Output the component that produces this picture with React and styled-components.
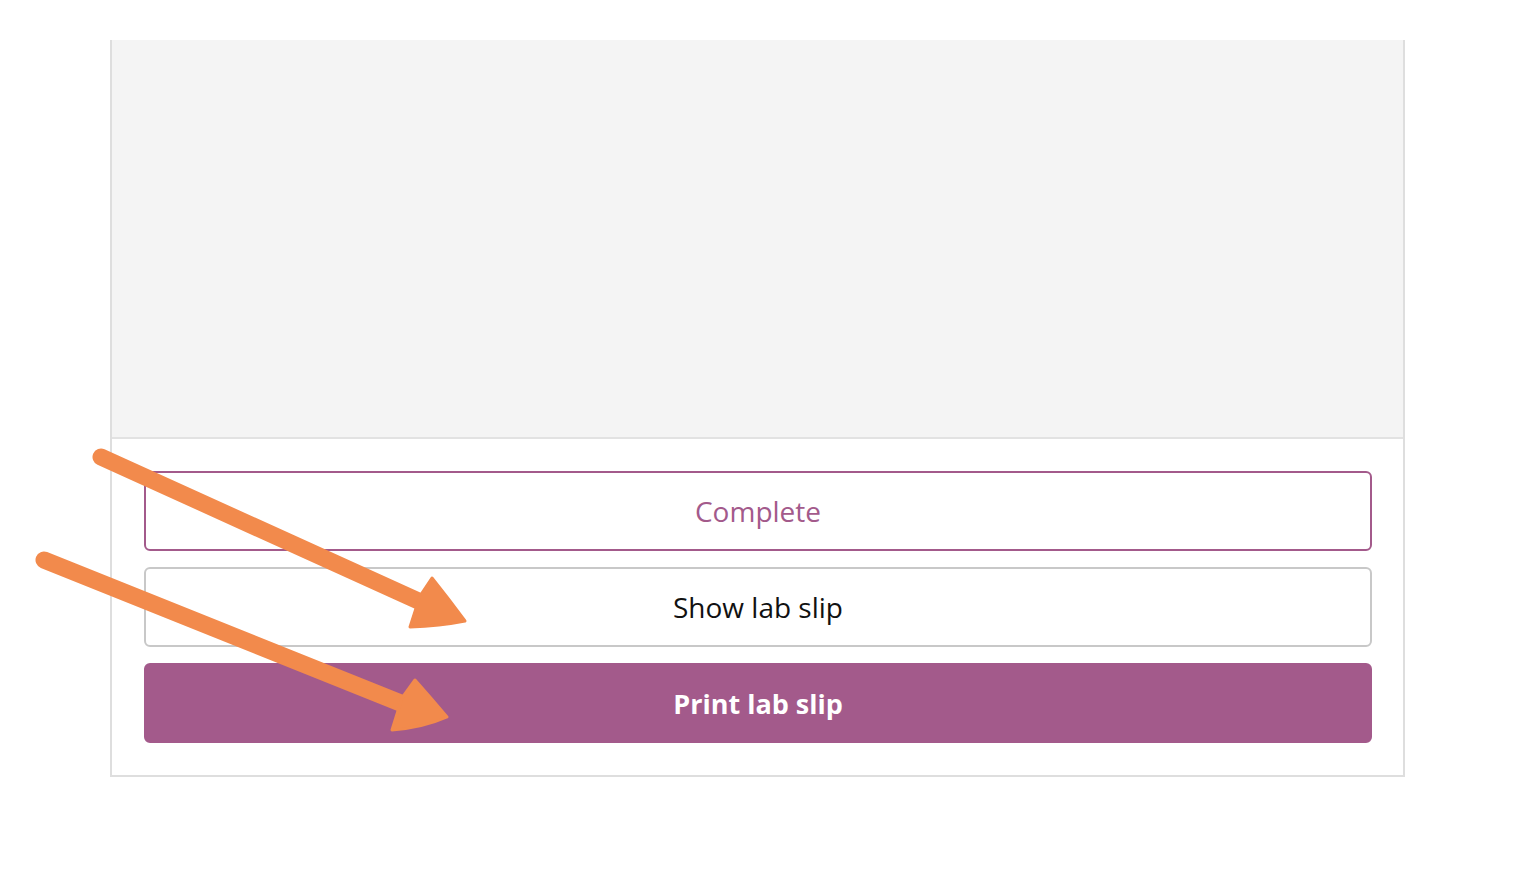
import styled, { createGlobalStyle } from "styled-components";

const Global = createGlobalStyle`
  body {
    margin: 0;
    background: #fff;
    font-family: "Open Sans", "Liberation Sans", sans-serif;
  }
`

const Page = styled.div`
  position: relative;
  width: 1514px;
  height: 896px;
  padding-top: 40px;
  box-sizing: border-box;
`

const Panel = styled.div`
  margin-left: 110px;
  width: 1295px;
  box-sizing: border-box;
  border: 2px solid #dedede;
  border-top: none;
  display: flex;
  flex-direction: column;
`

const Preview = styled.div`
  height: 397px;
  background: #f4f4f4;
  border-bottom: 2px solid #e2e2e2;
`

const Actions = styled.div`
  display: flex;
  flex-direction: column;
  gap: 16px;
  padding: 32px 31px 32px 32px;
`

const Button = styled.button`
  height: 80px;
  width: 100%;
  border-radius: 6px;
  font-family: "Open Sans", "Liberation Sans", sans-serif;
  font-size: ${p => (p.$primary ? "27px" : "28px")};
  font-weight: ${p => (p.$primary ? 700 : 400)};
  color: ${p => (p.$primary ? "#fff" : p.$outline ? "#a35a8b" : "#111")};
  background: ${p => (p.$primary ? "#a35a8b" : "#fff")};
  border: 2px solid ${p => (p.$primary ? "#a35a8b" : p.$outline ? "#a35a8b" : "#c8c8c8")};
  cursor: pointer;
`

const Overlay = styled.svg`
  position: absolute;
  left: 0;
  top: 0;
  pointer-events: none;
`

function Arrow({ x1, y1, x2, y2, head }) {
  return (
    <g fill="#f28a4c" stroke="#f28a4c">
      <line x1={x1} y1={y1} x2={x2} y2={y2} strokeWidth="17" strokeLinecap="round" />
      <path d={head} strokeWidth="3" strokeLinejoin="round" />
    </g>
  )
}

export default function App() {
  return (
    <Page>
      <Global />
      <Panel>
        <Preview />
        <Actions>
          <Button $outline>Complete</Button>
          <Button>Show lab slip</Button>
          <Button $primary>Print lab slip</Button>
        </Actions>
      </Panel>
      <Overlay width="1514" height="896">
        <Arrow x1={101} y1={457} x2={425} y2={604} head="M410,627 L420,596 L432,578 Q448,598 465,621 Q440,626 410,627 Z" />
        <Arrow x1={44} y1={560} x2={408} y2={706} head="M392,730 L402,698 L415,680 Q431,698 447,717 Q422,728 392,730 Z" />
      </Overlay>
    </Page>
  )
}
